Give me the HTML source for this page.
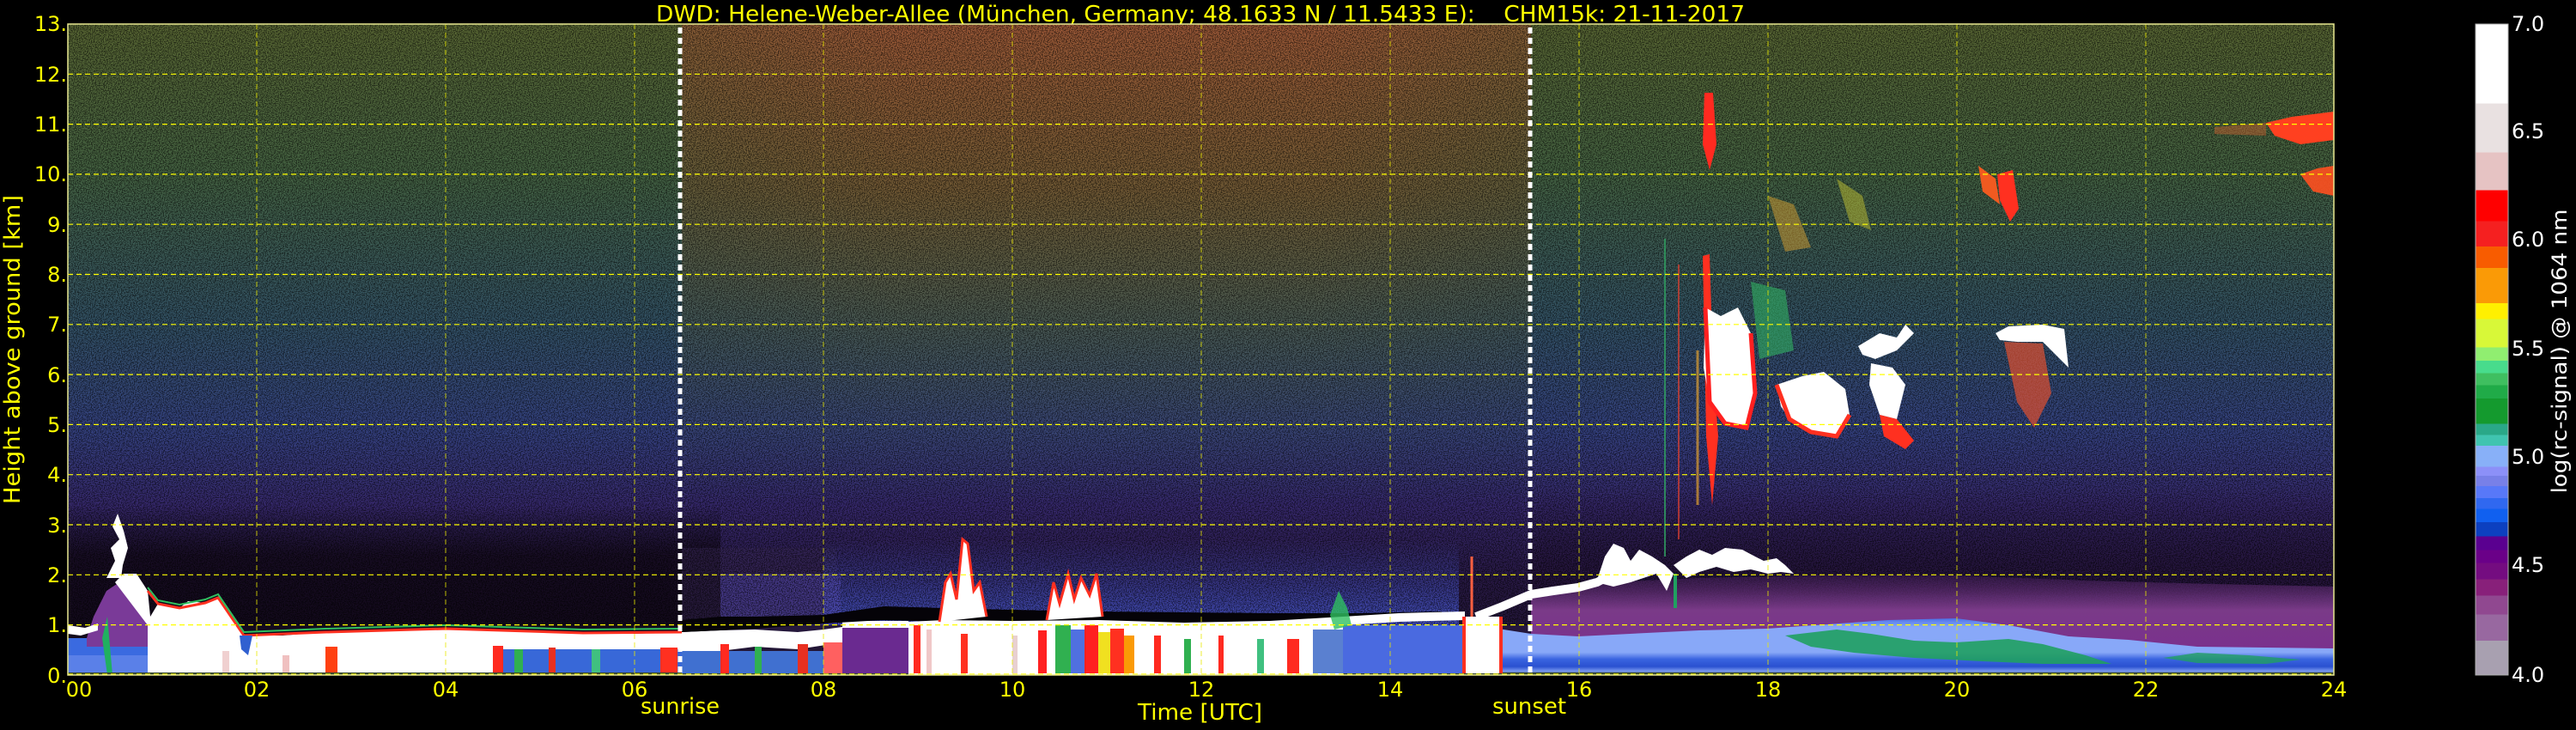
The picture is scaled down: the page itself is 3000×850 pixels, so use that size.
<!DOCTYPE html>
<html><head><meta charset="utf-8"><style>
html,body{margin:0;padding:0;background:#000;}
svg{display:block;}
text{font-family:"DejaVu Sans","Liberation Sans",sans-serif;}
</style></head><body>
<svg width="3000" height="850" viewBox="0 0 3000 850" xmlns="http://www.w3.org/2000/svg">
<defs>
<linearGradient id="gbase" x1="0" y1="0" x2="0" y2="1">
<stop offset="0" stop-color="#5a6834"/>
<stop offset="0.23" stop-color="#466544"/>
<stop offset="0.46" stop-color="#345468"/>
<stop offset="0.62" stop-color="#364484"/>
<stop offset="0.74" stop-color="#382a70"/>
<stop offset="0.85" stop-color="#2a1a48"/>
<stop offset="1" stop-color="#201530"/>
</linearGradient>
<linearGradient id="gday" x1="0" y1="0" x2="0" y2="1">
<stop offset="0" stop-color="#a85a3a" stop-opacity="0.9"/>
<stop offset="0.35" stop-color="#8a5a30" stop-opacity="0.7"/>
<stop offset="0.7" stop-color="#6a6a3a" stop-opacity="0.3"/>
<stop offset="1" stop-color="#4a5a50" stop-opacity="0"/>
</linearGradient>
<linearGradient id="gdayh" x1="0" y1="0" x2="1" y2="0">
<stop offset="0" stop-color="#fff" stop-opacity="0.7"/>
<stop offset="0.25" stop-color="#fff" stop-opacity="1"/>
<stop offset="0.75" stop-color="#fff" stop-opacity="1"/>
<stop offset="1" stop-color="#fff" stop-opacity="0.65"/>
</linearGradient>
<mask id="mday"><rect x="715" y="0" width="989" height="560" fill="url(#gdayh)"/></mask>
<linearGradient id="gnight" x1="0" y1="0" x2="0" y2="1">
<stop offset="0" stop-color="#140a1c" stop-opacity="0"/>
<stop offset="0.3" stop-color="#140a1c" stop-opacity="0.85"/>
<stop offset="1" stop-color="#100818" stop-opacity="0.95"/>
</linearGradient>
<linearGradient id="gnightr" x1="0" y1="0" x2="0" y2="1">
<stop offset="0" stop-color="#1e1030" stop-opacity="0"/>
<stop offset="1" stop-color="#241238" stop-opacity="0.8"/>
</linearGradient>
<linearGradient id="ghaze" x1="0" y1="0" x2="0" y2="1">
<stop offset="0" stop-color="#4a5ad8" stop-opacity="0"/>
<stop offset="1" stop-color="#4a5ad8" stop-opacity="0.85"/>
</linearGradient>
<linearGradient id="gblue" x1="0" y1="0" x2="0" y2="1">
<stop offset="0" stop-color="#4a70e8"/>
<stop offset="0.15" stop-color="#88a8f8"/>
<stop offset="0.6" stop-color="#88a8f8"/>
<stop offset="0.72" stop-color="#3a64e0"/>
<stop offset="0.85" stop-color="#2a50d0"/>
<stop offset="0.93" stop-color="#7898f0"/>
<stop offset="1" stop-color="#304040"/>
</linearGradient>
<linearGradient id="gpurp" x1="0" y1="0" x2="0" y2="1">
<stop offset="0" stop-color="#5a2a70" stop-opacity="0.3"/>
<stop offset="0.35" stop-color="#7a3a88"/>
<stop offset="1" stop-color="#7a2a90"/>
</linearGradient>
<filter id="nz" x="0" y="0" width="100%" height="100%">
<feTurbulence type="fractalNoise" baseFrequency="0.8" numOctaves="1" seed="4"/>
<feColorMatrix values="0 0 0 0 0  0 0 0 0 0  0 0 0 0 0  0 0 0 -4 2.4"/>
</filter>
<linearGradient id="gcb" x1="0" y1="0" x2="0" y2="1">
<stop offset="0" stop-color="#ffffff"/><stop offset="0.122" stop-color="#ffffff"/>
<stop offset="0.122" stop-color="#e9e1e1"/><stop offset="0.197" stop-color="#e9e1e1"/>
<stop offset="0.197" stop-color="#e6c3c3"/><stop offset="0.255" stop-color="#e6c3c3"/>
<stop offset="0.255" stop-color="#ff0000"/><stop offset="0.303" stop-color="#ff0000"/>
<stop offset="0.303" stop-color="#f52020"/><stop offset="0.342" stop-color="#f52020"/>
<stop offset="0.342" stop-color="#f85c00"/><stop offset="0.375" stop-color="#f85c00"/>
<stop offset="0.375" stop-color="#fa9a06"/><stop offset="0.429" stop-color="#fa9a06"/>
<stop offset="0.429" stop-color="#fff000"/><stop offset="0.453" stop-color="#fff000"/>
<stop offset="0.453" stop-color="#d8f838"/><stop offset="0.497" stop-color="#d8f838"/>
<stop offset="0.497" stop-color="#90ee70"/><stop offset="0.517" stop-color="#90ee70"/>
<stop offset="0.517" stop-color="#48dc8c"/><stop offset="0.536" stop-color="#48dc8c"/>
<stop offset="0.536" stop-color="#3fbf60"/><stop offset="0.555" stop-color="#3fbf60"/>
<stop offset="0.555" stop-color="#20ab48"/><stop offset="0.575" stop-color="#20ab48"/>
<stop offset="0.575" stop-color="#149a2e"/><stop offset="0.614" stop-color="#149a2e"/>
<stop offset="0.614" stop-color="#2aa888"/><stop offset="0.631" stop-color="#2aa888"/>
<stop offset="0.631" stop-color="#40c4b0"/><stop offset="0.648" stop-color="#40c4b0"/>
<stop offset="0.648" stop-color="#88b0f8"/><stop offset="0.68" stop-color="#88b0f8"/>
<stop offset="0.68" stop-color="#8c90f8"/><stop offset="0.694" stop-color="#8c90f8"/>
<stop offset="0.694" stop-color="#7880e8"/><stop offset="0.71" stop-color="#7880e8"/>
<stop offset="0.71" stop-color="#5878f8"/><stop offset="0.728" stop-color="#5878f8"/>
<stop offset="0.728" stop-color="#3068f0"/><stop offset="0.745" stop-color="#3068f0"/>
<stop offset="0.745" stop-color="#1060f0"/><stop offset="0.765" stop-color="#1060f0"/>
<stop offset="0.765" stop-color="#0c40c0"/><stop offset="0.787" stop-color="#0c40c0"/>
<stop offset="0.787" stop-color="#5a0090"/><stop offset="0.808" stop-color="#5a0090"/>
<stop offset="0.808" stop-color="#6a0088"/><stop offset="0.828" stop-color="#6a0088"/>
<stop offset="0.828" stop-color="#740c80"/><stop offset="0.853" stop-color="#740c80"/>
<stop offset="0.853" stop-color="#88207a"/><stop offset="0.878" stop-color="#88207a"/>
<stop offset="0.878" stop-color="#904890"/><stop offset="0.907" stop-color="#904890"/>
<stop offset="0.907" stop-color="#9868a0"/><stop offset="0.947" stop-color="#9868a0"/>
<stop offset="0.947" stop-color="#a8a0b0"/><stop offset="1" stop-color="#a8a0b0"/>
</linearGradient>
<clipPath id="cp"><rect x="0" y="0" width="2639" height="758"/></clipPath>
</defs>

<text x="1398" y="25" fill="#ffff00" font-size="26" text-anchor="middle" textLength="1268" lengthAdjust="spacingAndGlyphs">DWD: Helene-Weber-Allee (München, Germany; 48.1633 N / 11.5433 E):&#160;&#160;&#160;&#160;CHM15k: 21-11-2017</text>

<g transform="translate(79,28)" clip-path="url(#cp)">
<rect x="0" y="0" width="2639" height="758" fill="url(#gbase)"/>
<rect x="715" y="0" width="989" height="560" fill="url(#gday)" mask="url(#mday)"/>
<rect x="0" y="560" width="760" height="198" fill="url(#gnight)"/>
<rect x="715" y="610" width="180" height="90" fill="#3a2a5a" opacity="0.5"/>
<rect x="1704" y="540" width="935" height="125" fill="url(#gnightr)"/>
<rect x="880" y="600" width="740" height="100" fill="url(#ghaze)"/>
<rect x="760" y="640" width="140" height="60" fill="#5a50c0" opacity="0.5"/>
<!-- speckle noise -->
<rect x="0" y="0" width="2639" height="700" filter="url(#nz)" opacity="0.6"/>

<polygon fill="url(#gpurp)" points="1704,664 1759,652 1900,645 2034,642 2199,642 2350,648 2500,652 2639,655 2639,758 1704,758"/>
<polygon fill="url(#gblue)" points="1640,700 1704,710 1759,713 1900,706 1979,704 2034,700 2120,694 2199,692 2260,700 2330,713 2400,717 2480,725 2639,727 2639,758 1640,758"/>
<polygon fill="#20a060" opacity="0.9" points="2000,712 2060,705 2100,710 2150,718 2199,720 2260,716 2300,722 2350,735 2380,745 2300,745 2230,742 2150,738 2080,732 2030,725"/>
<polygon fill="#20a060" opacity="0.8" points="2440,738 2480,732 2540,735 2600,740 2560,745 2480,744"/>

<rect x="0" y="715" width="93" height="43" fill="#3a6ae0"/>
<rect x="0" y="735" width="93" height="23" fill="#5a80e8"/>
<polygon fill="#7a3a98" points="22,715 30,690 45,660 60,650 75,665 93,680 93,725 22,725"/>
<polygon fill="#ffffff" points="0,700 20,703 35,698 35,706 15,712 0,710"/>
<polygon fill="#20b060" points="40,715 46,690 52,758 46,758"/>
<polygon fill="#ffffff" points="45,645 55,625 50,610 60,600 52,585 58,570 65,590 70,610 64,630 62,645"/>
<polygon fill="#ffffff" points="55,650 65,640 80,640 93,660 96,690 105,675 115,677 130,680 140,672 160,674 175,668 190,690 205,712 250,712 300,708 400,705 440,704 500,705 600,709 660,710 715,708 715,758 93,758 93,700"/>
<polyline fill="none" stroke="#ff3020" stroke-width="3" points="93,660 105,675 130,680 160,674 175,668 190,690 205,712 300,708 440,704 600,709 715,708"/>
<polyline fill="none" stroke="#30c060" stroke-width="2" points="93,656 105,671 130,676 160,670 175,664 190,686 205,708 300,704 440,700 600,705 715,704"/>
<rect x="495" y="728" width="220" height="28" fill="#3868d8"/>
<rect x="495" y="724" width="12" height="34" fill="#ff2a20"/>
<rect x="520" y="728" width="10" height="28" fill="#30b050"/>
<rect x="560" y="726" width="8" height="30" fill="#e83020"/>
<rect x="610" y="728" width="10" height="28" fill="#40c080"/>
<rect x="690" y="726" width="20" height="32" fill="#ff3020"/>
<rect x="300" y="725" width="14" height="33" fill="#ff4010"/>
<rect x="250" y="735" width="8" height="23" fill="#f0c0c0"/>
<rect x="180" y="730" width="8" height="28" fill="#f0d0d0"/>
<polygon fill="#3060d0" points="200,712 215,712 210,735 202,728"/>
<rect x="0" y="755" width="2639" height="3" fill="#3a4a30"/>

<polygon fill="#ffffff" points="715,708 760,706 800,705 850,708 880,705 902,702 902,720 850,728 800,725 760,730 715,732"/>
<rect x="715" y="730" width="187" height="26" fill="#4070d0"/>
<rect x="760" y="722" width="10" height="34" fill="#ff2a20"/>
<rect x="800" y="725" width="8" height="31" fill="#30b050"/>
<rect x="850" y="722" width="12" height="34" fill="#e83020"/>
<rect x="880" y="720" width="22" height="36" fill="#ff6060"/>
<rect x="902" y="702" width="77" height="54" fill="#6a2a90"/>
<rect x="902" y="695" width="77" height="8" fill="#ffffff"/>
<polygon fill="#050308" points="715,694 760,690 800,690 880,688 950,678 1020,680 1100,682 1200,684 1300,685 1400,686 1500,686 1600,684 1600,690 1500,694 1400,695 1300,697 1200,698 1100,697 1020,696 950,694 880,698 800,704 760,706 715,708"/>
<polygon fill="#ffffff" points="979,696 1020,694 1100,695 1200,694 1300,697 1400,695 1485,690 1485,758 979,758"/>
<rect x="985" y="700" width="8" height="56" fill="#ff2a20"/>
<rect x="1000" y="705" width="6" height="51" fill="#f0c8c8"/>
<rect x="1040" y="710" width="8" height="46" fill="#ff3020"/>
<rect x="1100" y="712" width="6" height="44" fill="#e8d0d0"/>
<rect x="1130" y="706" width="10" height="50" fill="#ff2020"/>
<rect x="1150" y="700" width="18" height="56" fill="#30b050"/>
<rect x="1168" y="705" width="16" height="51" fill="#5070e0"/>
<rect x="1184" y="700" width="16" height="56" fill="#ff2020"/>
<rect x="1200" y="708" width="14" height="48" fill="#f0e020"/>
<rect x="1214" y="704" width="16" height="52" fill="#ff3020"/>
<rect x="1230" y="712" width="12" height="44" fill="#fa9a06"/>
<rect x="1265" y="712" width="8" height="44" fill="#ff2a20"/>
<rect x="1300" y="716" width="8" height="40" fill="#30b050"/>
<rect x="1340" y="712" width="6" height="44" fill="#ff2a20"/>
<rect x="1385" y="716" width="8" height="40" fill="#40c080"/>
<rect x="1420" y="716" width="14" height="40" fill="#ff2a20"/>
<rect x="1450" y="705" width="35" height="51" fill="#5a80d0"/>
<polygon fill="#ffffff" points="1015,696 1022,650 1028,640 1035,670 1042,600 1048,605 1055,660 1062,650 1070,690"/>
<polyline fill="none" stroke="#ff3020" stroke-width="3" points="1015,696 1022,650 1028,640 1035,670 1042,600 1048,605 1055,660 1062,650 1070,690"/>
<polygon fill="#ffffff" points="1140,694 1148,650 1155,675 1165,640 1172,670 1180,645 1190,665 1198,640 1205,690"/>
<polyline fill="none" stroke="#ff3020" stroke-width="3" points="1140,694 1148,650 1155,675 1165,640 1172,670 1180,645 1190,665 1198,640 1205,690"/>
<rect x="1485" y="700" width="142" height="56" fill="#4a6ae0"/>
<polygon fill="#ffffff" points="1485,690 1550,686 1627,684 1627,694 1550,696 1485,700"/>
<polygon fill="#30c060" opacity="0.8" points="1470,688 1480,660 1490,680 1495,700 1475,705"/>
<rect x="1627" y="690" width="40" height="66" fill="#ffffff"/>
<rect x="1624" y="690" width="4" height="66" fill="#ff3020"/>
<rect x="1667" y="690" width="4" height="66" fill="#ff3020"/>
<line x1="1635" y1="690" x2="1635" y2="620" stroke="#ff6040" stroke-width="3"/>
<polyline fill="none" stroke="#ffffff" stroke-width="10" points="1640,690 1671,678 1704,664 1730,660 1759,656 1781,650 1800,640"/>
<g fill="#ffffff">
<polygon points="1780,650 1790,620 1800,605 1812,610 1820,625 1830,612 1845,620 1860,630 1870,640 1862,660 1850,640 1835,645 1820,650 1800,655"/>
<polygon points="1870,630 1885,620 1900,612 1915,618 1930,610 1950,612 1965,620 1975,625 1990,622 2000,630 2010,640 1995,638 1980,640 1960,635 1940,638 1920,632 1900,638 1885,645"/>
<rect x="1870" y="640" width="4" height="40" fill="#20a060"/>
</g>
<g>
<polygon fill="#ff3020" points="1904,270 1912,268 1916,400 1922,480 1915,560 1908,480"/>
<polygon fill="#ff2a20" points="1906,80 1916,80 1920,140 1912,170 1904,140"/>
<polygon fill="#ffffff" points="1907,330 1925,340 1945,330 1960,360 1965,430 1955,470 1930,465 1912,440 1905,400"/>
<polyline fill="none" stroke="#ff2020" stroke-width="5" points="1907,330 1912,440 1930,465 1955,470 1965,430 1960,360"/>
<polygon fill="#ffffff" points="1990,420 2020,410 2045,405 2070,425 2075,455 2060,480 2030,475 2005,460 1995,445"/>
<polyline fill="none" stroke="#ff3020" stroke-width="5" points="1990,420 2005,460 2030,475 2060,480 2075,455"/>
<polygon fill="#ffffff" points="2085,375 2110,360 2130,365 2140,350 2150,360 2130,380 2105,390 2090,385"/>
<polygon fill="#ffffff" points="2100,395 2125,400 2140,420 2130,460 2110,455 2098,420"/>
<polygon fill="#ff3020" points="2110,455 2130,460 2150,485 2140,495 2115,480"/>
<polygon fill="#ffffff" points="2245,360 2260,352 2300,350 2325,355 2330,400 2315,385 2300,370 2270,370 2250,368"/>
<polygon fill="#e05030" opacity="0.7" points="2255,370 2300,372 2310,430 2290,470 2270,440"/>
<polygon fill="#30b060" opacity="0.6" points="1960,300 2000,310 2010,380 1970,390"/>
<polygon fill="#ff3020" points="2247,175 2265,170 2272,215 2262,230 2250,205"/>
<polygon fill="#f05a20" points="2225,165 2245,180 2250,210 2230,195"/>
<polygon fill="#ff4020" points="2560,115 2590,108 2639,102 2639,135 2600,140 2570,130"/>
<polygon fill="#ff5020" opacity="0.9" points="2600,175 2620,168 2639,165 2639,200 2615,195"/>
<polygon fill="#d8a030" opacity="0.5" points="1980,200 2010,210 2030,260 2000,265"/>
<polygon fill="#c0c030" opacity="0.5" points="2060,180 2090,200 2100,240 2075,230"/>
<polygon fill="#c06030" opacity="0.5" points="2500,120 2560,115 2560,130 2500,128"/>
<line x1="1860" y1="250" x2="1860" y2="620" stroke="#30a060" stroke-width="2" opacity="0.8"/>
<line x1="1876" y1="280" x2="1876" y2="600" stroke="#e04030" stroke-width="2" opacity="0.7"/>
<line x1="1898" y1="380" x2="1898" y2="560" stroke="#e0a030" stroke-width="3" opacity="0.7"/>
</g>
<g stroke="#ffff00" stroke-width="1.2" stroke-dasharray="6,4" fill="none">
<line x1="0" y1="58.3" x2="2639" y2="58.3"/><line x1="0" y1="116.6" x2="2639" y2="116.6"/>
<line x1="0" y1="174.9" x2="2639" y2="174.9"/><line x1="0" y1="233.2" x2="2639" y2="233.2"/>
<line x1="0" y1="291.5" x2="2639" y2="291.5"/><line x1="0" y1="349.8" x2="2639" y2="349.8"/>
<line x1="0" y1="408.1" x2="2639" y2="408.1"/><line x1="0" y1="466.4" x2="2639" y2="466.4"/>
<line x1="0" y1="524.7" x2="2639" y2="524.7"/><line x1="0" y1="583" x2="2639" y2="583"/>
<line x1="0" y1="641.3" x2="2639" y2="641.3"/><line x1="0" y1="699.6" x2="2639" y2="699.6"/>
<line x1="0" y1="757" x2="2639" y2="757"/>
</g>
<g stroke="#e8e800" stroke-width="1" stroke-dasharray="6,4" fill="none" opacity="0.8">
<line x1="220" y1="0" x2="220" y2="758"/><line x1="440" y1="0" x2="440" y2="758"/>
<line x1="660" y1="0" x2="660" y2="758"/><line x1="880" y1="0" x2="880" y2="758"/>
<line x1="1100" y1="0" x2="1100" y2="758"/><line x1="1320" y1="0" x2="1320" y2="758"/>
<line x1="1540" y1="0" x2="1540" y2="758"/><line x1="1760" y1="0" x2="1760" y2="758"/>
<line x1="1980" y1="0" x2="1980" y2="758"/><line x1="2200" y1="0" x2="2200" y2="758"/>
<line x1="2420" y1="0" x2="2420" y2="758"/>
</g>
<g stroke="#ffffff" stroke-width="5" stroke-dasharray="7,5">
<line x1="713" y1="4" x2="713" y2="758"/><line x1="1703" y1="4" x2="1703" y2="758"/>
</g>
</g>
<rect x="79" y="28" width="2639" height="758" fill="none" stroke="#e8e890" stroke-width="1.5"/>

<g fill="#ffff00" font-size="24" text-anchor="end">
<text x="78" y="36">13.</text><text x="78" y="95">12.</text><text x="78" y="153">11.</text>
<text x="78" y="211">10.</text><text x="78" y="270">9.</text><text x="78" y="328">8.</text>
<text x="78" y="386">7.</text><text x="78" y="445">6.</text><text x="78" y="503">5.</text>
<text x="78" y="561">4.</text><text x="78" y="620">3.</text><text x="78" y="678">2.</text>
<text x="78" y="736">1.</text><text x="78" y="795">0.</text>
</g>
<g fill="#ffff00" font-size="24" text-anchor="middle">
<text x="92" y="811">00</text><text x="299" y="811">02</text><text x="519" y="811">04</text>
<text x="739" y="811">06</text><text x="959" y="811">08</text><text x="1179" y="811">10</text>
<text x="1399" y="811">12</text><text x="1619" y="811">14</text><text x="1839" y="811">16</text>
<text x="2059" y="811">18</text><text x="2279" y="811">20</text><text x="2499" y="811">22</text>
<text x="2718" y="811">24</text>
</g>
<g fill="#ffff00" font-size="26">
<text x="746" y="831" textLength="92" lengthAdjust="spacingAndGlyphs">sunrise</text>
<text x="1738" y="831" textLength="86" lengthAdjust="spacingAndGlyphs">sunset</text>
<text x="1325" y="838" textLength="145" lengthAdjust="spacingAndGlyphs">Time [UTC]</text>
</g>
<text transform="translate(23,407) rotate(-90)" fill="#ffff00" font-size="26" text-anchor="middle" textLength="360" lengthAdjust="spacingAndGlyphs">Height above ground [km]</text>

<rect x="2883" y="28" width="38" height="758" fill="url(#gcb)" stroke="#b0b0b0" stroke-width="1"/>
<g fill="#ffffff" font-size="24">
<text x="2925" y="36">7.0</text><text x="2925" y="161">6.5</text><text x="2925" y="287">6.0</text>
<text x="2925" y="414">5.5</text><text x="2925" y="540">5.0</text><text x="2925" y="666">4.5</text>
<text x="2925" y="794">4.0</text>
</g>
<text transform="translate(2989,409) rotate(-90)" fill="#ffffff" font-size="24" text-anchor="middle" textLength="331" lengthAdjust="spacingAndGlyphs">log(rc-signal) @ 1064 nm</text>
</svg>
</body></html>
